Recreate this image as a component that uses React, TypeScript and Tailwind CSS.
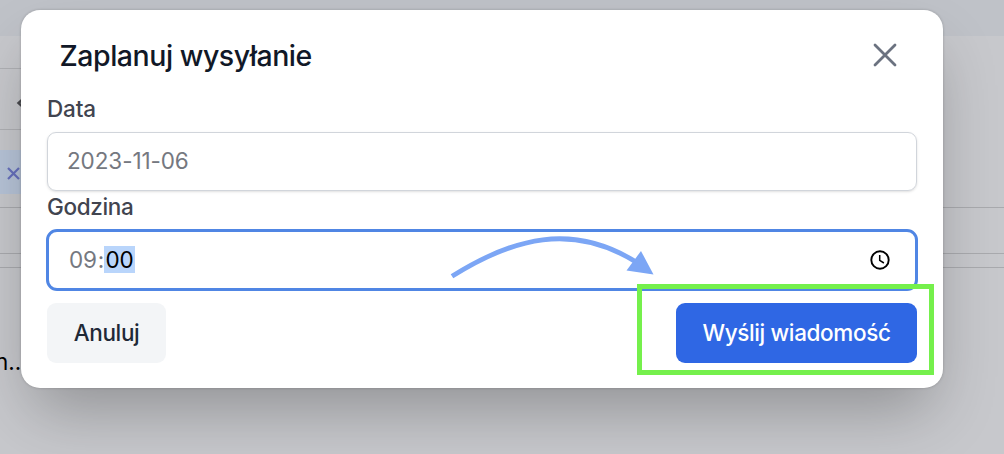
import { useState } from 'react';

interface FieldProps {
  label: string;
  labelClass: string;
  children: React.ReactNode;
}

function Field({ label, labelClass, children }: FieldProps) {
  return (
    <div>
      <div className={`text-[22.5px] font-[550] text-[#41444f] ${labelClass}`}>{label}</div>
      {children}
    </div>
  );
}

function ClockIcon() {
  return (
    <svg width="20" height="20" viewBox="0 0 20 20" fill="none" stroke="#000">
      <circle cx="10" cy="10" r="8.7" strokeWidth="1.9" />
      <path d="M9.7 5v5.4l4.2 2.6" strokeWidth="1.5" />
    </svg>
  );
}

function Backdrop() {
  return (
    <div className="flex h-full flex-col bg-[#c7c8cc] text-black">
      <div className="h-9 bg-[#bfc2c8]" />
      <div className="flex h-[33px] w-[40px] border-b border-[#afb0b4]" />
      <div className="flex h-[61px] w-[40px] items-center border-b border-[#afb0b4] pl-4 pt-[7px]">
        <svg width="9" height="12" viewBox="0 0 9 12" fill="none" stroke="#4b4c50" strokeWidth="2.4">
          <path d="M7 2 2.5 6 7 10" />
        </svg>
      </div>
      <div className="flex h-[78px] items-start border-b border-[#a9aaae] pt-5">
        <div className="flex h-11 w-[40px] items-center bg-[#b7c4d8] pl-[7px] pt-[3px]">
          <svg width="13" height="13" viewBox="0 0 13 13" fill="none" stroke="#6670bd" strokeWidth="2.2">
            <path d="M1 1l11 11M12 1 1 12" />
          </svg>
        </div>
      </div>
      <div className="h-[46px] border-b border-[#a9aaae]" />
      <div className="h-[14px] border-b border-[#a9aaae]" />
      <div className="-ml-[5px] pt-[80px] text-[22.5px] leading-7">n...</div>
    </div>
  );
}

export default function App() {
  const [open] = useState(true);

  return (
    <div className="relative h-[454px] w-[1004px] overflow-hidden font-[Inter,sans-serif]">
      <Backdrop />
      {open && (
        <div className="absolute left-[21px] top-[10px] h-[378px] w-[922px] rounded-[19px] bg-white px-[26px] shadow-[0_32px_64px_-12px_rgba(0,0,0,0.28),0_0_3px_rgba(0,0,0,0.2)]">
          <div className="flex h-[84px] items-center justify-between pl-[12px] pr-[20px] pt-[7px]">
            <h3 className="pl-[0.5px] pt-[2px] text-[28.5px] font-[550] tracking-[-0.47px] text-[#111827]">Zaplanuj wysyłanie</h3>
            <svg className="mb-[1px]" width="24" height="24" viewBox="0 0 24 24" fill="none" stroke="#6b7280" strokeWidth="2.8" strokeLinecap="round">
              <path d="M2 2l20 20M22 2 2 22" />
            </svg>
          </div>

          <Field label="Data" labelClass="h-[38px] leading-[30px] tracking-[-0.15px]">
            <div className="flex h-[59px] items-center rounded-[9px] border border-[#d1d5db] pb-px pl-[19px] text-[22.5px] tracking-[-0.1px] text-[#757880] shadow-sm">
              2023-11-06
            </div>
          </Field>

          <Field label="Godzina" labelClass="h-[38px] leading-[32px] tracking-[-0.35px]">
            <div className="-mx-px flex h-[62px] items-center justify-between rounded-[11px] border-[3px] border-[#5086e4] pb-px pl-[20px] pr-[25px] text-[22.5px] text-[#757880]">
              <div className="flex items-center tracking-[-0.2px]">
                <span>09</span>
                <span className="pl-px">:</span>
                <span className="h-[27px] w-[31px] bg-[#b9d5fb] text-center leading-[27px] text-black">00</span>
              </div>
              <ClockIcon />
            </div>
          </Field>

          <div className="flex justify-between pt-3 text-[22.5px] font-[550] tracking-[-0.36px]">
            <button className="h-[60px] w-[119px] rounded-[9px] bg-[#f3f5f7] text-[#1f2937]">Anuluj</button>
            <button className="h-[60px] w-[241px] rounded-[9px] bg-[#2f67e4] text-white">Wyślij wiadomość</button>
          </div>
        </div>
      )}

      {/* annotation arrow */}
      <svg className="absolute left-[440px] top-[225px]" width="230" height="60" viewBox="440 225 230 60">
        <path d="M452 276.3C513 238 572 222 636 262" fill="none" stroke="#7ca6f5" strokeWidth="4.8" />
        <path d="M641 251 653.5 274.5 626.5 270.5Z" fill="#7ca6f5" />
      </svg>
      <div className="absolute left-[637px] top-[284px] h-[91px] w-[297px] border-[5px] border-[#75f04c]" />
    </div>
  );
}
